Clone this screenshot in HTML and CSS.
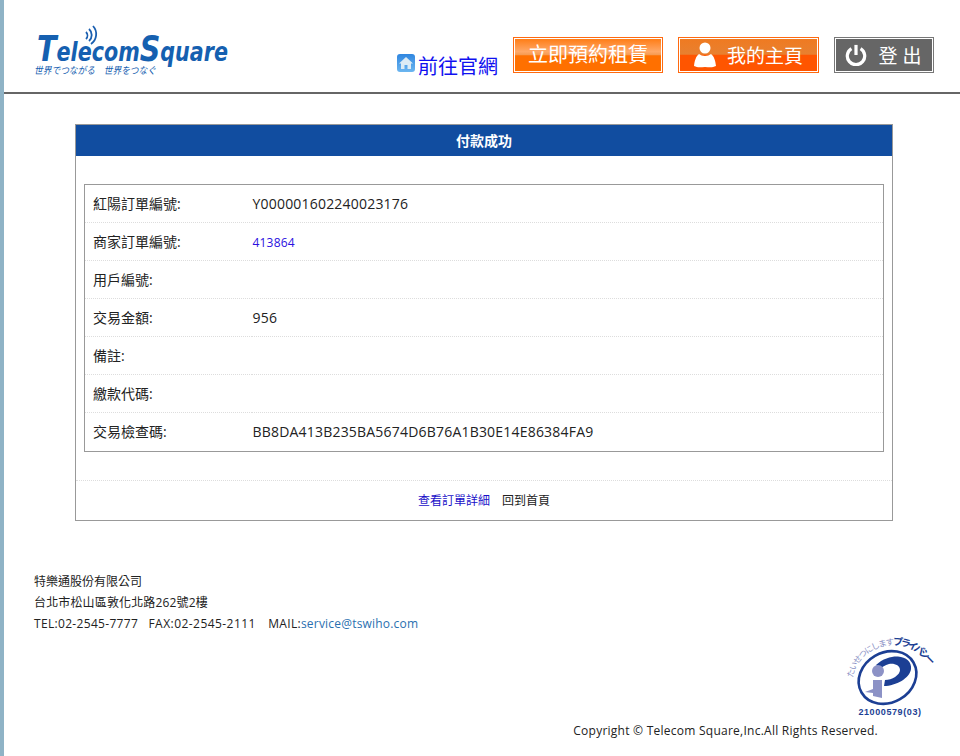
FILE: index.html
```html
<!DOCTYPE html>
<html lang="zh-Hant">
<head>
    <meta charset="UTF-8">
    <title>付款成功</title>
    <link rel="stylesheet" href="styles.css">
</head>
<body>
<div class="header">
    <a class="logo" href="#">
        <svg width="198" height="56" viewBox="0 0 198 56">
            <g fill="none" stroke="#1a5fb0" stroke-width="1.800">
                <path d="M52 8 a5 5 0 0 1 0 7"/>
                <path d="M55 5 a8 8 0 0 1 0 12"/>
                <path d="M59 2 a12 12 0 0 1 -2 18"/>
            </g>
            <text class="logo-name" x="3" y="37" textLength="191" lengthAdjust="spacingAndGlyphs"><tspan class="logo-cap">T</tspan>elecom<tspan class="logo-cap">S</tspan>quare</text>
            <text class="logo-sub" x="0" y="50" textLength="122" lengthAdjust="spacingAndGlyphs">世界でつながる　世界をつなぐ</text>
        </svg>
    </a>
    <div class="nav">
        <a class="nav-home" href="#">
            <svg width="18" height="18" viewBox="0 0 18 18">
                <defs>
                    <linearGradient id="home-bg" x1="0" y1="0" x2="0" y2="1">
                        <stop offset="0" stop-color="#2f86e0"/>
                        <stop offset="1" stop-color="#6cb6f0"/>
                    </linearGradient>
                </defs>
                <rect width="18" height="18" rx="3" fill="url(#home-bg)"/>
                <path d="M9 3 L16 9.500 L14 9.500 L14 15 L10.500 15 L10.500 11 L7.500 11 L7.500 15 L4 15 L4 9.500 L2 9.500 Z" fill="#dcebf5"/>
            </svg>
            <span class="nav-home-text">前往官網</span>
        </a>
        <a class="btn btn-book" href="#"><span>立即預約租賃</span></a>
        <a class="btn btn-home" href="#">
            <svg width="22" height="26" viewBox="0 0 22 26">
                <circle cx="11" cy="6" r="5.500" fill="#fff"/>
                <path d="M5 12 C8 14.500 14 14.500 17 12 C20 14 21.500 19 22 24 C18 26 15 25 11 25 C7 25 4 26 0 24 C0.500 19 2 14 5 12 Z" fill="#fff"/>
            </svg>
            <span>我的主頁</span>
        </a>
        <a class="btn btn-out" href="#">
            <svg width="22" height="22" viewBox="0 0 24 24" fill="none" stroke="#fff" stroke-width="3.500">
                <path d="M7 5 A9.500 9.500 0 1 0 17 5"/>
                <path d="M12 1 L12 12"/>
            </svg>
            <span>登 出</span>
        </a>
    </div>
</div>

<div class="panel">
    <div class="panel-title">付款成功</div>
    <div class="panel-body">
        <table class="info">
            <tr><th>紅陽訂單編號:</th><td>Y000001602240023176</td></tr>
            <tr><th>商家訂單編號:</th><td><a class="order-no" href="#">413864</a></td></tr>
            <tr><th>用戶編號:</th><td></td></tr>
            <tr><th>交易金額:</th><td>956</td></tr>
            <tr><th>備註:</th><td></td></tr>
            <tr><th>繳款代碼:</th><td></td></tr>
            <tr><th>交易檢查碼:</th><td>BB8DA413B235BA5674D6B76A1B30E14E86384FA9</td></tr>
        </table>
    </div>
    <div class="panel-foot">
        <a class="link-order" href="#">查看訂單詳細</a>
        <a class="link-back" href="#">回到首頁</a>
    </div>
</div>

<div class="footer">
    <div class="company">
        <p>特樂通股份有限公司</p>
        <p class="address">台北市松山區敦化北路262號2樓</p>
        <p class="contact">TEL:02-2545-7777 &nbsp;&nbsp;<span class="fax">FAX:02-2545-2111</span> &nbsp;&nbsp;<span class="mail">MAIL:</span><a href="#">service@tswiho.com</a></p>
    </div>
    <div class="pmark">
        <svg width="88" height="84" viewBox="0 0 88 84">
            <defs>
                <path id="pmark-arc" d="M7 42 C10 22 29 9 49 9 C63 9 76 18 88 34"/>
            </defs>
            <text class="pmark-arc"><textPath href="#pmark-arc"><tspan fill="#8c92c6">たいせつにします</tspan><tspan class="pmark-strong" fill="#1c3f94">プライバシー</tspan></textPath></text>
            <ellipse cx="41.500" cy="41.500" rx="30" ry="25" transform="rotate(-30 41.500 41.500)" fill="none" stroke="#1c3f94" stroke-width="2.600"/>
            <path d="M30 29 C37 22 47 20 52 20.500 C60 21 66 26 65 33 C64 42 50 50 38 50 L39 44 C46 44 54 39 54 34 C54 29 48 27 43 28 C39 29 36 31 34 33 Z" fill="#1c3f94"/>
            <circle cx="32" cy="35" r="6" fill="#8c92c6"/>
            <path d="M27 44 L36 44 L36 62 L27 60 L27 57 L19 56 L27 53 Z" fill="#8c92c6"/>
            <text class="pmark-no" x="44" y="79" text-anchor="middle">21000579(03)</text>
        </svg>
    </div>
    <div class="copyright">Copyright © Telecom Square,Inc.All Rights Reserved.</div>
</div>
</body>
</html>
```

FILE: styles.css
```css
* {
    padding: 0;
    margin: 0;
    box-sizing: border-box;
}

body {
    height: 756px;
    overflow: hidden;
    border-left: 4px solid #8fb3c6;
    background: #fff;
    color: #222;
    font-family: "Open Sans", "Noto Sans CJK TC", sans-serif;
    font-size: 14px;
}

a {
    text-decoration: none;
}

.header {
    display: flex;
    justify-content: space-between;
    height: 94px;
    padding: 24px 26px 0 30px;
    border-bottom: 2px solid #666;
}

.logo svg {
    display: block;
    overflow: visible;
}

.logo-name {
    font-family: "DejaVu Sans", sans-serif;
    font-size: 26px;
    font-weight: bold;
    font-style: italic;
    fill: #1560b0;
}

.logo-cap {
    font-size: 36px;
}

.logo-sub {
    font-family: "Noto Sans CJK JP", sans-serif;
    font-size: 10px;
    font-style: italic;
    fill: #1560b0;
}

.nav {
    display: flex;
    align-items: flex-start;
    padding-top: 13px;
}

.nav-home {
    display: flex;
    align-items: flex-start;
    gap: 3px;
    margin: 17px 15px 0 0;
    color: #1010f0;
    font-size: 20px;
}

.nav-home-text {
    margin-top: -1px;
    line-height: 28px;
}

.btn {
    display: flex;
    align-items: center;
    justify-content: center;
    height: 36px;
    padding-bottom: 3px;
    border: 1px solid #ff6a10;
    box-shadow: inset 0 0 0 1px #fff;
    color: #fff;
    font-size: 20px;
}

.btn-book {
    width: 150px;
    background: linear-gradient(#ff7a10 0, #ffa868 40%, #f59a50 50%, #ff7000 52%, #ff7000 100%);
}

.btn-home {
    gap: 11px;
    width: 141px;
    margin-left: 15px;
    padding-bottom: 1px;
    background: linear-gradient(#f07a20 0, #e88030 48%, #ff5500 50%, #ff5500 100%);
    font-size: 19px;
}

.btn-out {
    gap: 12px;
    width: 100px;
    margin-left: 15px;
    padding: 0 0 1px 0;
    border-color: #777;
    background: #666;
    font-size: 19px;
}

.btn-out span {
    margin-right: 2px;
}

.panel {
    width: 818px;
    height: 397px;
    margin: 30px 0 0 71px;
    border: 1px solid #999;
}

.panel-title {
    height: 31px;
    background: #114da0;
    color: #fff;
    font-size: 14px;
    font-weight: bold;
    line-height: 31px;
    text-align: center;
}

.panel-body {
    height: 325px;
    padding: 28px 8px 0;
    border-bottom: 1px dotted #ddd;
}

.info {
    width: 100%;
    border: 1px solid #999;
    border-collapse: collapse;
}

.info tr {
    height: 38px;
    border-bottom: 1px dotted #ddd;
}

.info tr:last-child {
    height: 39px;
}

.info th {
    width: 167px;
    padding: 0 0 2px 8px;
    font-weight: normal;
    text-align: left;
}

.info td {
    padding-left: 1px;
    letter-spacing: 0.2px;
}

.info tr:last-child td {
    padding-bottom: 2px;
}

.order-no {
    color: #2a10e0;
    font-size: 12px;
    letter-spacing: 0.2px;
}

.panel-foot {
    padding-top: 11px;
    font-size: 12px;
    line-height: 18px;
    text-align: center;
}

.link-order {
    margin-right: 9px;
    color: #1a10c8;
}

.link-back {
    color: #222;
}

.footer {
    padding: 50px 26px 0 30px;
    font-size: 12px;
}

.company p {
    line-height: 21px;
}

.company .address {
    letter-spacing: 0.15px;
}

.company .contact {
    letter-spacing: 0.32px;
}

.company .fax {
    letter-spacing: 0.45px;
}

.company .mail {
    margin-left: 2px;
}

.company a {
    color: #2a70b0;
    letter-spacing: 0.2px;
}

.pmark {
    display: flex;
    justify-content: flex-end;
    margin-top: 2px;
}

.pmark svg {
    overflow: visible;
}

.pmark-arc {
    font-family: "Noto Sans CJK JP", sans-serif;
    font-size: 8.500px;
    letter-spacing: -1.500px;
}

.pmark-strong {
    font-size: 10px;
    font-weight: bold;
    letter-spacing: -3px;
}

.pmark-no {
    font-family: "Liberation Sans", sans-serif;
    font-size: 9px;
    font-weight: bold;
    letter-spacing: 0.6px;
    fill: #1c3f94;
}

.copyright {
    margin: 2px 56px 0 0;
    letter-spacing: 0.25px;
    text-align: right;
}
```
